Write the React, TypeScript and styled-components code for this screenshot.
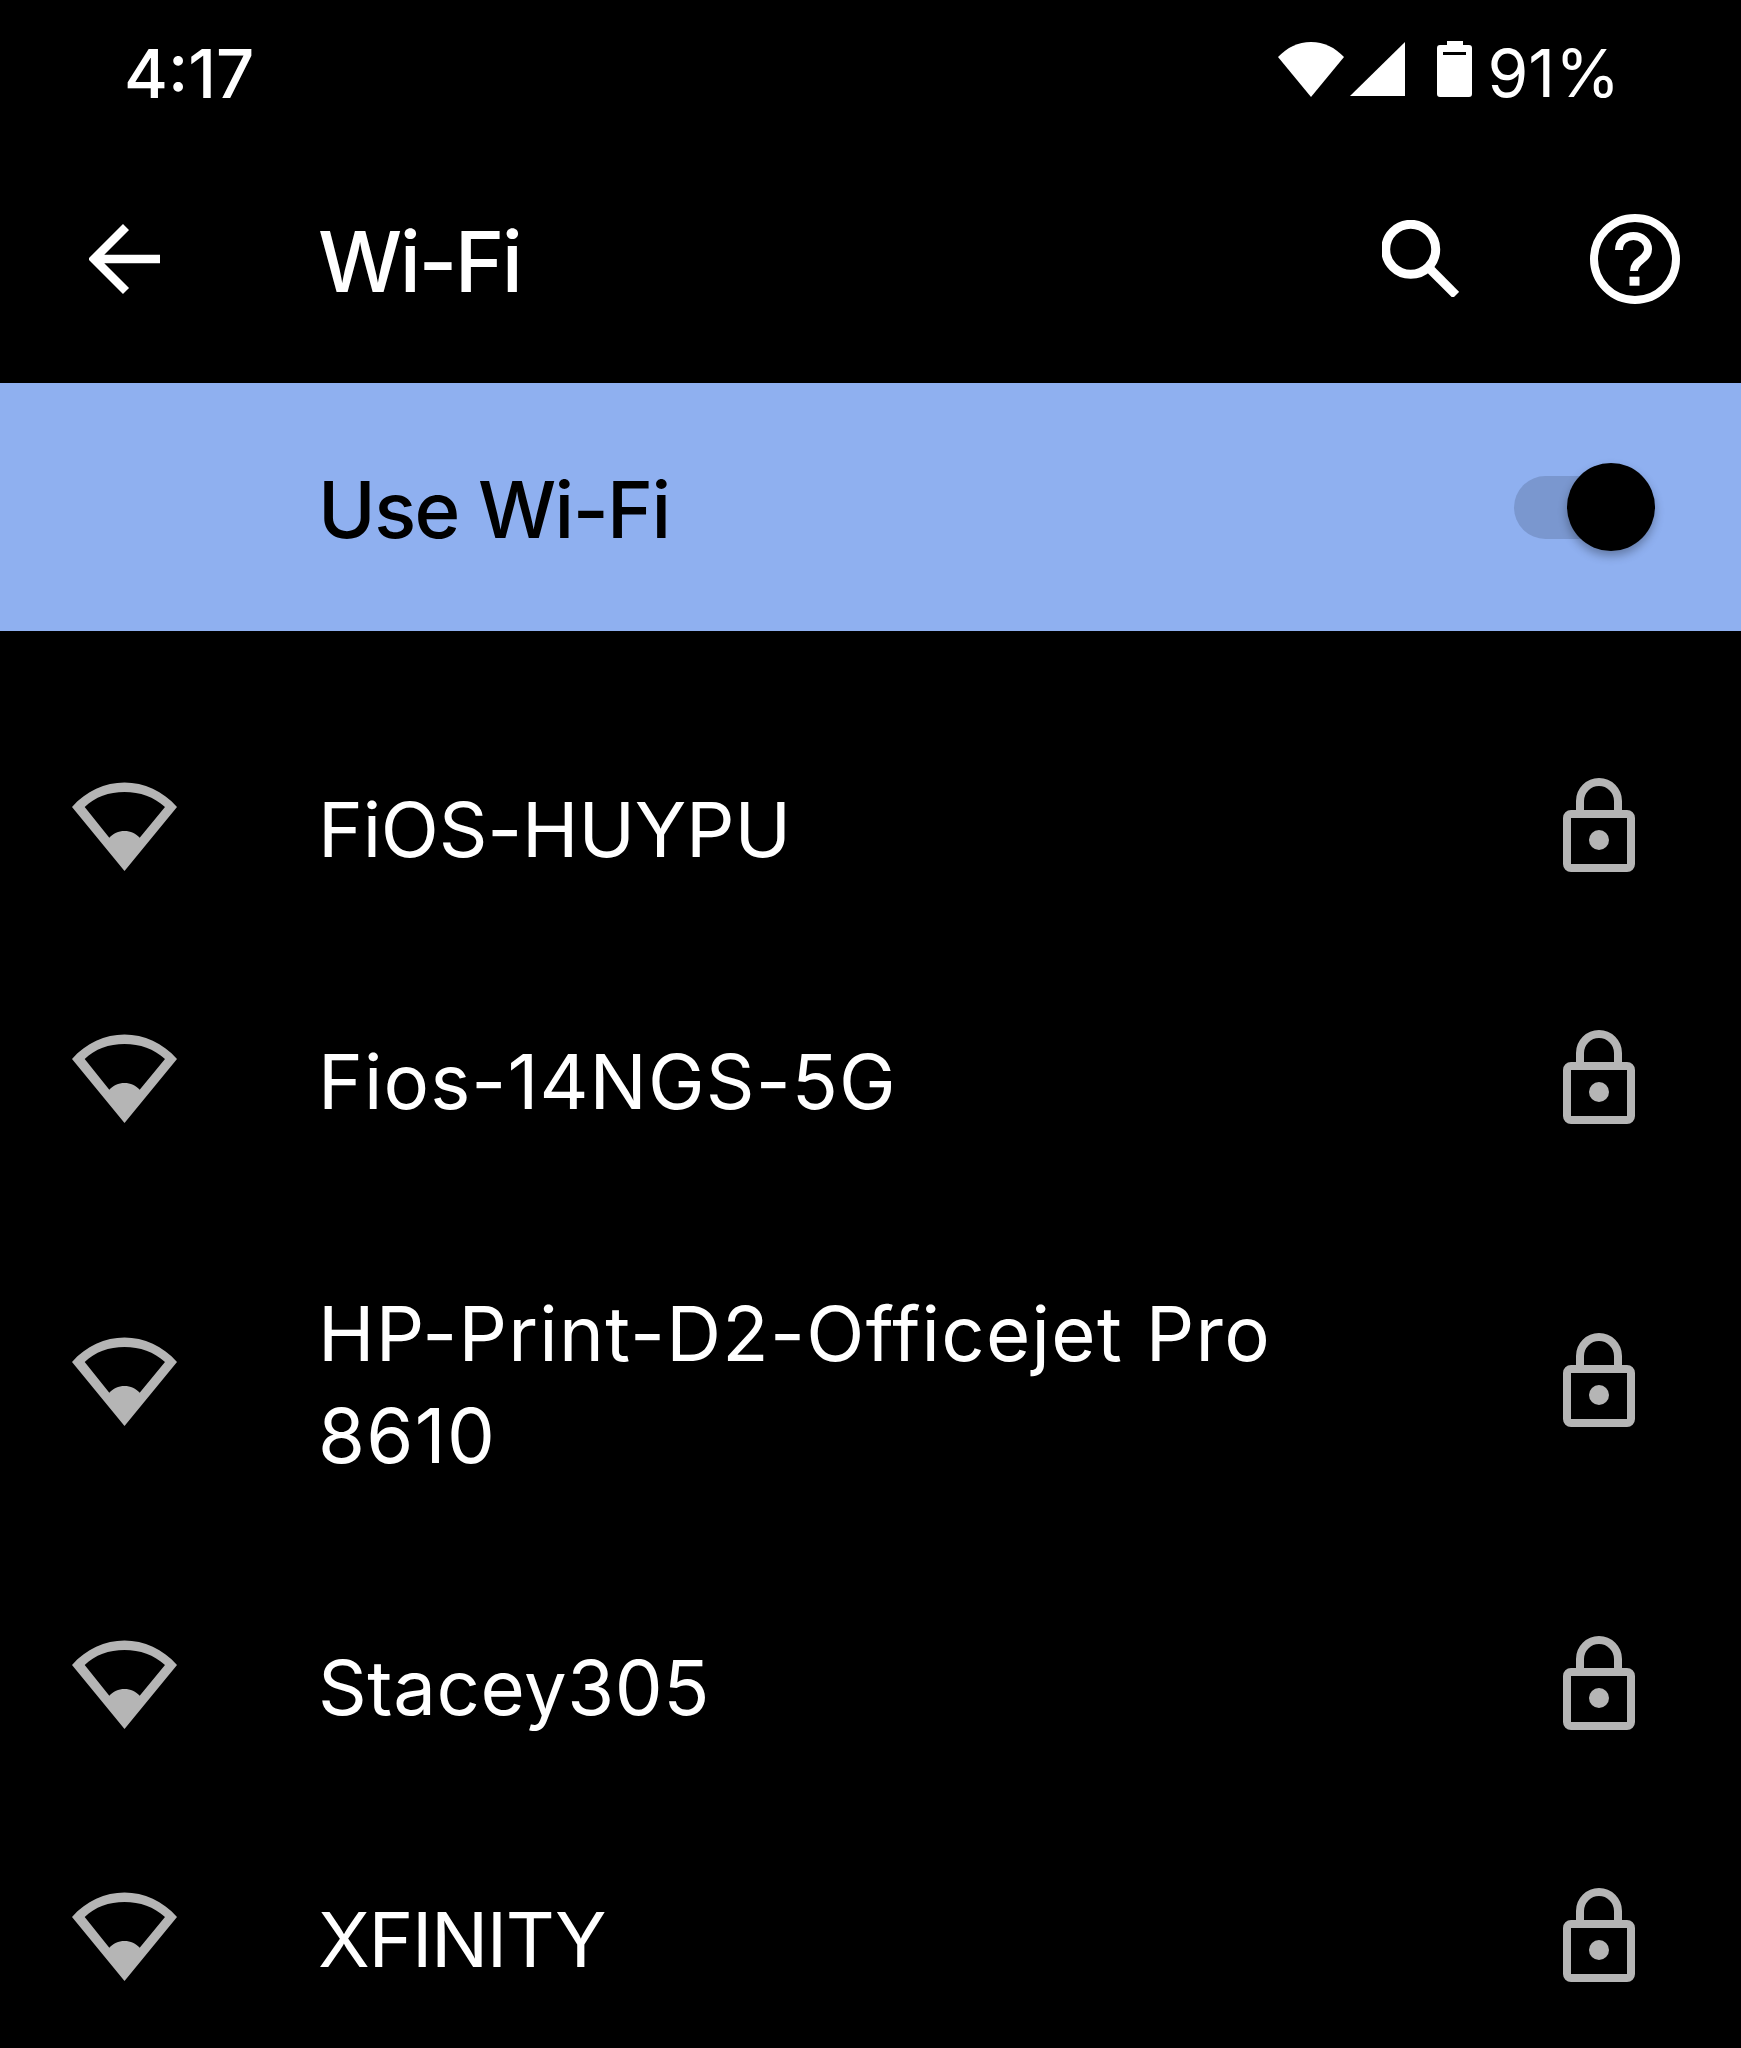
import React from 'react'
import styled, { createGlobalStyle } from 'styled-components'

const GlobalStyle = createGlobalStyle`
  html, body {
    margin: 0;
    background: #000;
  }
`

const Page = styled.div`
  width: 1741px;
  height: 2048px;
  overflow: hidden;
  background: #000;
  color: #fff;
  font-family: Inter, "Noto Sans", sans-serif;
`

const StatusBar = styled.div`
  height: 134px;
  box-sizing: border-box;
  padding: 4px 121px 0 124px;
  display: flex;
  align-items: center;
`

const Time = styled.div`
  padding-top: 8px;
  font-size: 67px;
  font-weight: 500;
  margin-right: auto;
`

const Percent = styled.div`
  padding-top: 8px;
  font-size: 66px;
  font-weight: 400;
  margin-left: 15px;
`

const StatusIcon = styled.svg<{ $gap?: number }>`
  display: block;
  fill: #fff;
  margin-left: ${(p) => p.$gap ?? 0}px;
`

const Toolbar = styled.div`
  height: 249px;
  box-sizing: border-box;
  padding: 0 61px 0 89px;
  display: flex;
  align-items: center;
`

const ToolIcon = styled.svg<{ $gap?: number; $stroke?: number }>`
  display: block;
  flex: none;
  fill: none;
  stroke: #fff;
  stroke-width: ${(p) => p.$stroke ?? 8};
  margin-left: ${(p) => p.$gap ?? 0}px;
`

const Title = styled.h1`
  margin: 6px auto 0 158px;
  font-size: 84px;
  font-weight: 500;
  letter-spacing: -2.5px;
`

const Band = styled.div`
  height: 248px;
  box-sizing: border-box;
  padding: 0 86px 0 318px;
  background: #8fb0f0;
  color: #000;
  display: flex;
  align-items: center;
  justify-content: space-between;
`

const BandLabel = styled.div`
  padding-top: 5px;
  font-size: 78px;
  font-weight: 500;
  letter-spacing: -1.6px;
`

const Switch = styled.div`
  position: relative;
  width: 141px;
  height: 88px;
  display: flex;
  align-items: center;
`

const Track = styled.div`
  width: 129px;
  height: 63px;
  border-radius: 32px;
  background: #7a97cf;
`

const Thumb = styled.div`
  position: absolute;
  right: 0;
  top: 0;
  width: 88px;
  height: 88px;
  border-radius: 50%;
  background: #000;
  box-shadow: 0 5px 10px rgba(0, 0, 0, 0.3);
`

const List = styled.div`
  margin-top: 72px;
`

const Row = styled.div`
  padding: 75px 106px 75px 72px;
  display: flex;
  align-items: center;
`

const Name = styled.div<{ $tracking: number }>`
  width: 1000px;
  margin-left: 141px;
  margin-right: auto;
  font-size: 76px;
  line-height: 102px;
  letter-spacing: ${(p) => p.$tracking}px;
  color: #fff;
`

const RowIcon = styled.svg<{ $lift: number }>`
  display: block;
  flex: none;
  margin-bottom: ${(p) => p.$lift}px;
`

const networks = [
  { name: 'FiOS-HUYPU', tracking: -0.2 },
  { name: 'Fios-14NGS-5G', tracking: 1.1 },
  { name: 'HP-Print-D2-Officejet Pro 8610', tracking: 1.3 },
  { name: 'Stacey305', tracking: 0.6 },
  { name: 'XFINITY', tracking: -1.4 },
]

const WeakWifi = () => (
  <RowIcon $lift={5} width="105" height="89" viewBox="0 0 105 89" fill="#b5b5b5">
    <path
      fillRule="evenodd"
      d="M52.5 89L0 25C14 9 33 0.5 52.5 0.5S91 9 105 25ZM37.3 55.7C41 51.5 46.5 49 52.5 49S64 51.5 67.7 55.7L93 25C82 15 68 10 52.5 10S23 15 12.7 25Z"
    />
  </RowIcon>
)

const Lock = () => (
  <RowIcon $lift={8} width="72" height="94" viewBox="0 0 72 94" fill="none" stroke="#b5b5b5" strokeWidth="8">
    <rect x="4" y="36" width="64" height="54" rx="4" />
    <path d="M17 36V23A19 19 0 0 1 55 23V36" />
    <circle cx="36" cy="62" r="10" fill="#b5b5b5" stroke="none" />
  </RowIcon>
)

export default function App() {
  return (
    <Page>
      <GlobalStyle />
      <StatusBar>
        <Time>4:17</Time>
        <StatusIcon width="66" height="55" viewBox="0 0 66 55">
          <path d="M33 55L0 15C9 5.5 20 0 33 0S57 5.5 66 15Z" />
        </StatusIcon>
        <StatusIcon $gap={6} width="55" height="54" viewBox="0 0 55 54">
          <path d="M0 54L55 0V54Z" />
        </StatusIcon>
        <StatusIcon $gap={32} width="35" height="56" viewBox="0 0 35 56">
          <path
            fillRule="evenodd"
            d="M10 0H26V4H32A3 3 0 0 1 35 7V53A3 3 0 0 1 32 56H3A3 3 0 0 1 0 53V7A3 3 0 0 1 3 4H10ZM6 11V14H29V11Z"
          />
        </StatusIcon>
        <Percent>91%</Percent>
      </StatusBar>
      <Toolbar>
        <ToolIcon $stroke={8.5} width="71" height="70" viewBox="0 0 71 70">
          <path d="M37 3L5 35L37 67M5 35H71" />
        </ToolIcon>
        <Title>Wi-Fi</Title>
        <ToolIcon $stroke={9} width="77" height="77" viewBox="0 0 77 77">
          <circle cx="28.7" cy="29.3" r="25" />
          <path d="M47 48L74 75" />
        </ToolIcon>
        <ToolIcon $gap={131} width="90" height="90" viewBox="0 0 90 90">
          <circle cx="45" cy="45" r="41" />
          <path d="M29 36C29 27 36 22 43.5 22C52 22 58 28 58 35C58 46 44 46 44 57" />
          <rect x="39.5" y="62.7" width="10" height="9" fill="#fff" stroke="none" />
        </ToolIcon>
      </Toolbar>
      <Band>
        <BandLabel>Use Wi-Fi</BandLabel>
        <Switch>
          <Track />
          <Thumb />
        </Switch>
      </Band>
      <List>
        {networks.map((n) => (
          <Row key={n.name}>
            <WeakWifi />
            <Name $tracking={n.tracking}>{n.name}</Name>
            <Lock />
          </Row>
        ))}
      </List>
    </Page>
  )
}
